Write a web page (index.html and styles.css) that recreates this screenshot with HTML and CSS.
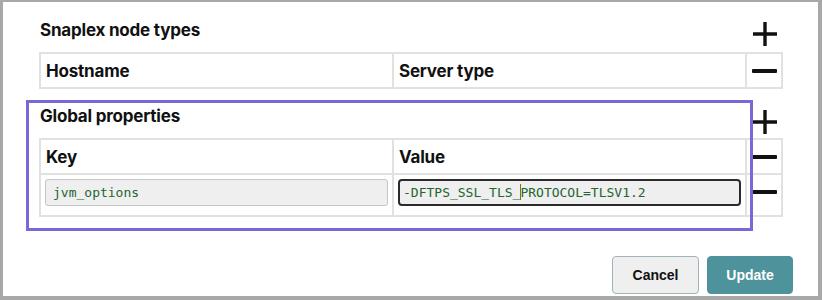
FILE: index.html
```html
<!DOCTYPE html>
<html lang="en">
<head>
    <meta charset="UTF-8">
    <meta name="viewport" content="width=device-width, initial-scale=1.0">
    <title>Snaplex settings</title>
    <link rel="stylesheet" href="styles.css">
</head>
<body>
    <div class="dialog">

        <!-- Snaplex node types -->
        <section class="group">
            <div class="group-head">
                <h2>Snaplex node types</h2>
                <span class="icon add">
                    <svg width="26" height="26" viewBox="0 0 26 26"><path d="M13 1v24M1 13h24" stroke="#111" stroke-width="3.4" fill="none"/></svg>
                </span>
            </div>
            <table class="grid">
                <tr>
                    <th>Hostname</th>
                    <th>Server type</th>
                    <th class="act"><span class="minus"></span></th>
                </tr>
            </table>
        </section>

        <!-- Global properties -->
        <section class="group marked">
            <div class="group-head">
                <h2>Global properties</h2>
                <span class="icon add">
                    <svg width="26" height="26" viewBox="0 0 26 26"><path d="M13 1v24M1 13h24" stroke="#111" stroke-width="3.4" fill="none"/></svg>
                </span>
            </div>
            <table class="grid">
                <tr>
                    <th>Key</th>
                    <th>Value</th>
                    <th class="act"><span class="minus"></span></th>
                </tr>
                <tr>
                    <td><div class="field">jvm_options</div></td>
                    <td><div class="field focused">-DFTPS_SSL_TLS_<span class="caret"></span>PROTOCOL=TLSV1.2</div></td>
                    <td class="act"><span class="minus"></span></td>
                </tr>
            </table>
            <div class="highlight"></div>
        </section>

        <div class="actions">
            <button class="btn cancel">Cancel</button>
            <button class="btn update">Update</button>
        </div>
    </div>
</body>
</html>
```

FILE: styles.css
```css
/* Basic Reset */
* {
    box-sizing: border-box;
    margin: 0;
    padding: 0;
}

body {
    font-family: Inter, "Liberation Sans", sans-serif;
    background: #fff;
    color: #111;
}

.dialog {
    width: 822px;
    height: 300px;
    background: #fff;
    border-style: solid;
    border-color: #a8a8a8;
    border-width: 2px 4px 4px 3px;
    padding: 18px 35px 0 36px;
}

.group {
    position: relative;
}

.group-head {
    display: flex;
    justify-content: space-between;
    align-items: flex-start;
    height: 32px;
}

.group-head h2 {
    font-size: 17px;
    font-weight: 700;
    line-height: 20px;
    letter-spacing: -0.2px;
    padding-left: 1px;
}

.icon.add {
    width: 36px;
    display: flex;
    justify-content: center;
    padding-top: 1px;
}

/* Tables */
.grid {
    width: 100%;
    border-collapse: collapse;
    table-layout: fixed;
}

.grid th,
.grid td {
    border: 2px solid #e1e1e1;
    text-align: left;
}

.grid th {
    height: 35px;
    font-size: 17px;
    font-weight: 700;
    letter-spacing: -0.2px;
    padding: 0 5px;
    vertical-align: middle;
}

.grid td {
    height: 42px;
    padding: 4px 4px 8px;
    vertical-align: top;
}

.grid .act {
    width: 36px;
    padding: 0;
    text-align: center;
}

.minus {
    display: block;
    width: 25px;
    height: 4px;
    margin: 0 auto;
    border-radius: 1px;
    background: #111;
}

.grid td.act .minus {
    margin-top: 15px;
}

.field {
    height: 27px;
    background: #efefef;
    border: 1px solid #c6c6c6;
    border-radius: 3px;
    padding: 0 7px;
    font-family: "DejaVu Sans Mono", monospace;
    font-size: 13px;
    line-height: 25px;
    color: #24652f;
    white-space: nowrap;
}

.field.focused {
    border: 2px solid #2b2b2b;
    border-radius: 4px;
    padding: 0 3px;
    line-height: 23px;
}

.caret {
    display: inline-block;
    width: 1px;
    height: 16px;
    background: #6e7a22;
    vertical-align: -3px;
    margin-right: -1px;
}

.marked {
    margin-top: 19px;
}

.marked .group-head {
    height: 30px;
}

.marked .group-head h2 {
    margin-top: -2px;
}

/* Purple highlight round the global properties */
.highlight {
    position: absolute;
    left: -13px;
    top: -8px;
    width: 727px;
    height: 131px;
    border: 3px solid #7b68d8;
    pointer-events: none;
}

/* Buttons */
.actions {
    display: flex;
    justify-content: flex-end;
    gap: 8px;
    margin-top: 39px;
    margin-right: -10px;
}

.btn {
    height: 38px;
    border-radius: 4px;
    font-family: "Liberation Sans", Arial, sans-serif;
    font-size: 14px;
    font-weight: 700;
    cursor: pointer;
}

.cancel {
    width: 87px;
    background: #efefef;
    border: 1px solid #9db3b8;
    color: #111;
}

.update {
    width: 86px;
    background: #4e939b;
    border: 1px solid #4e939b;
    color: #fff;
}
```
